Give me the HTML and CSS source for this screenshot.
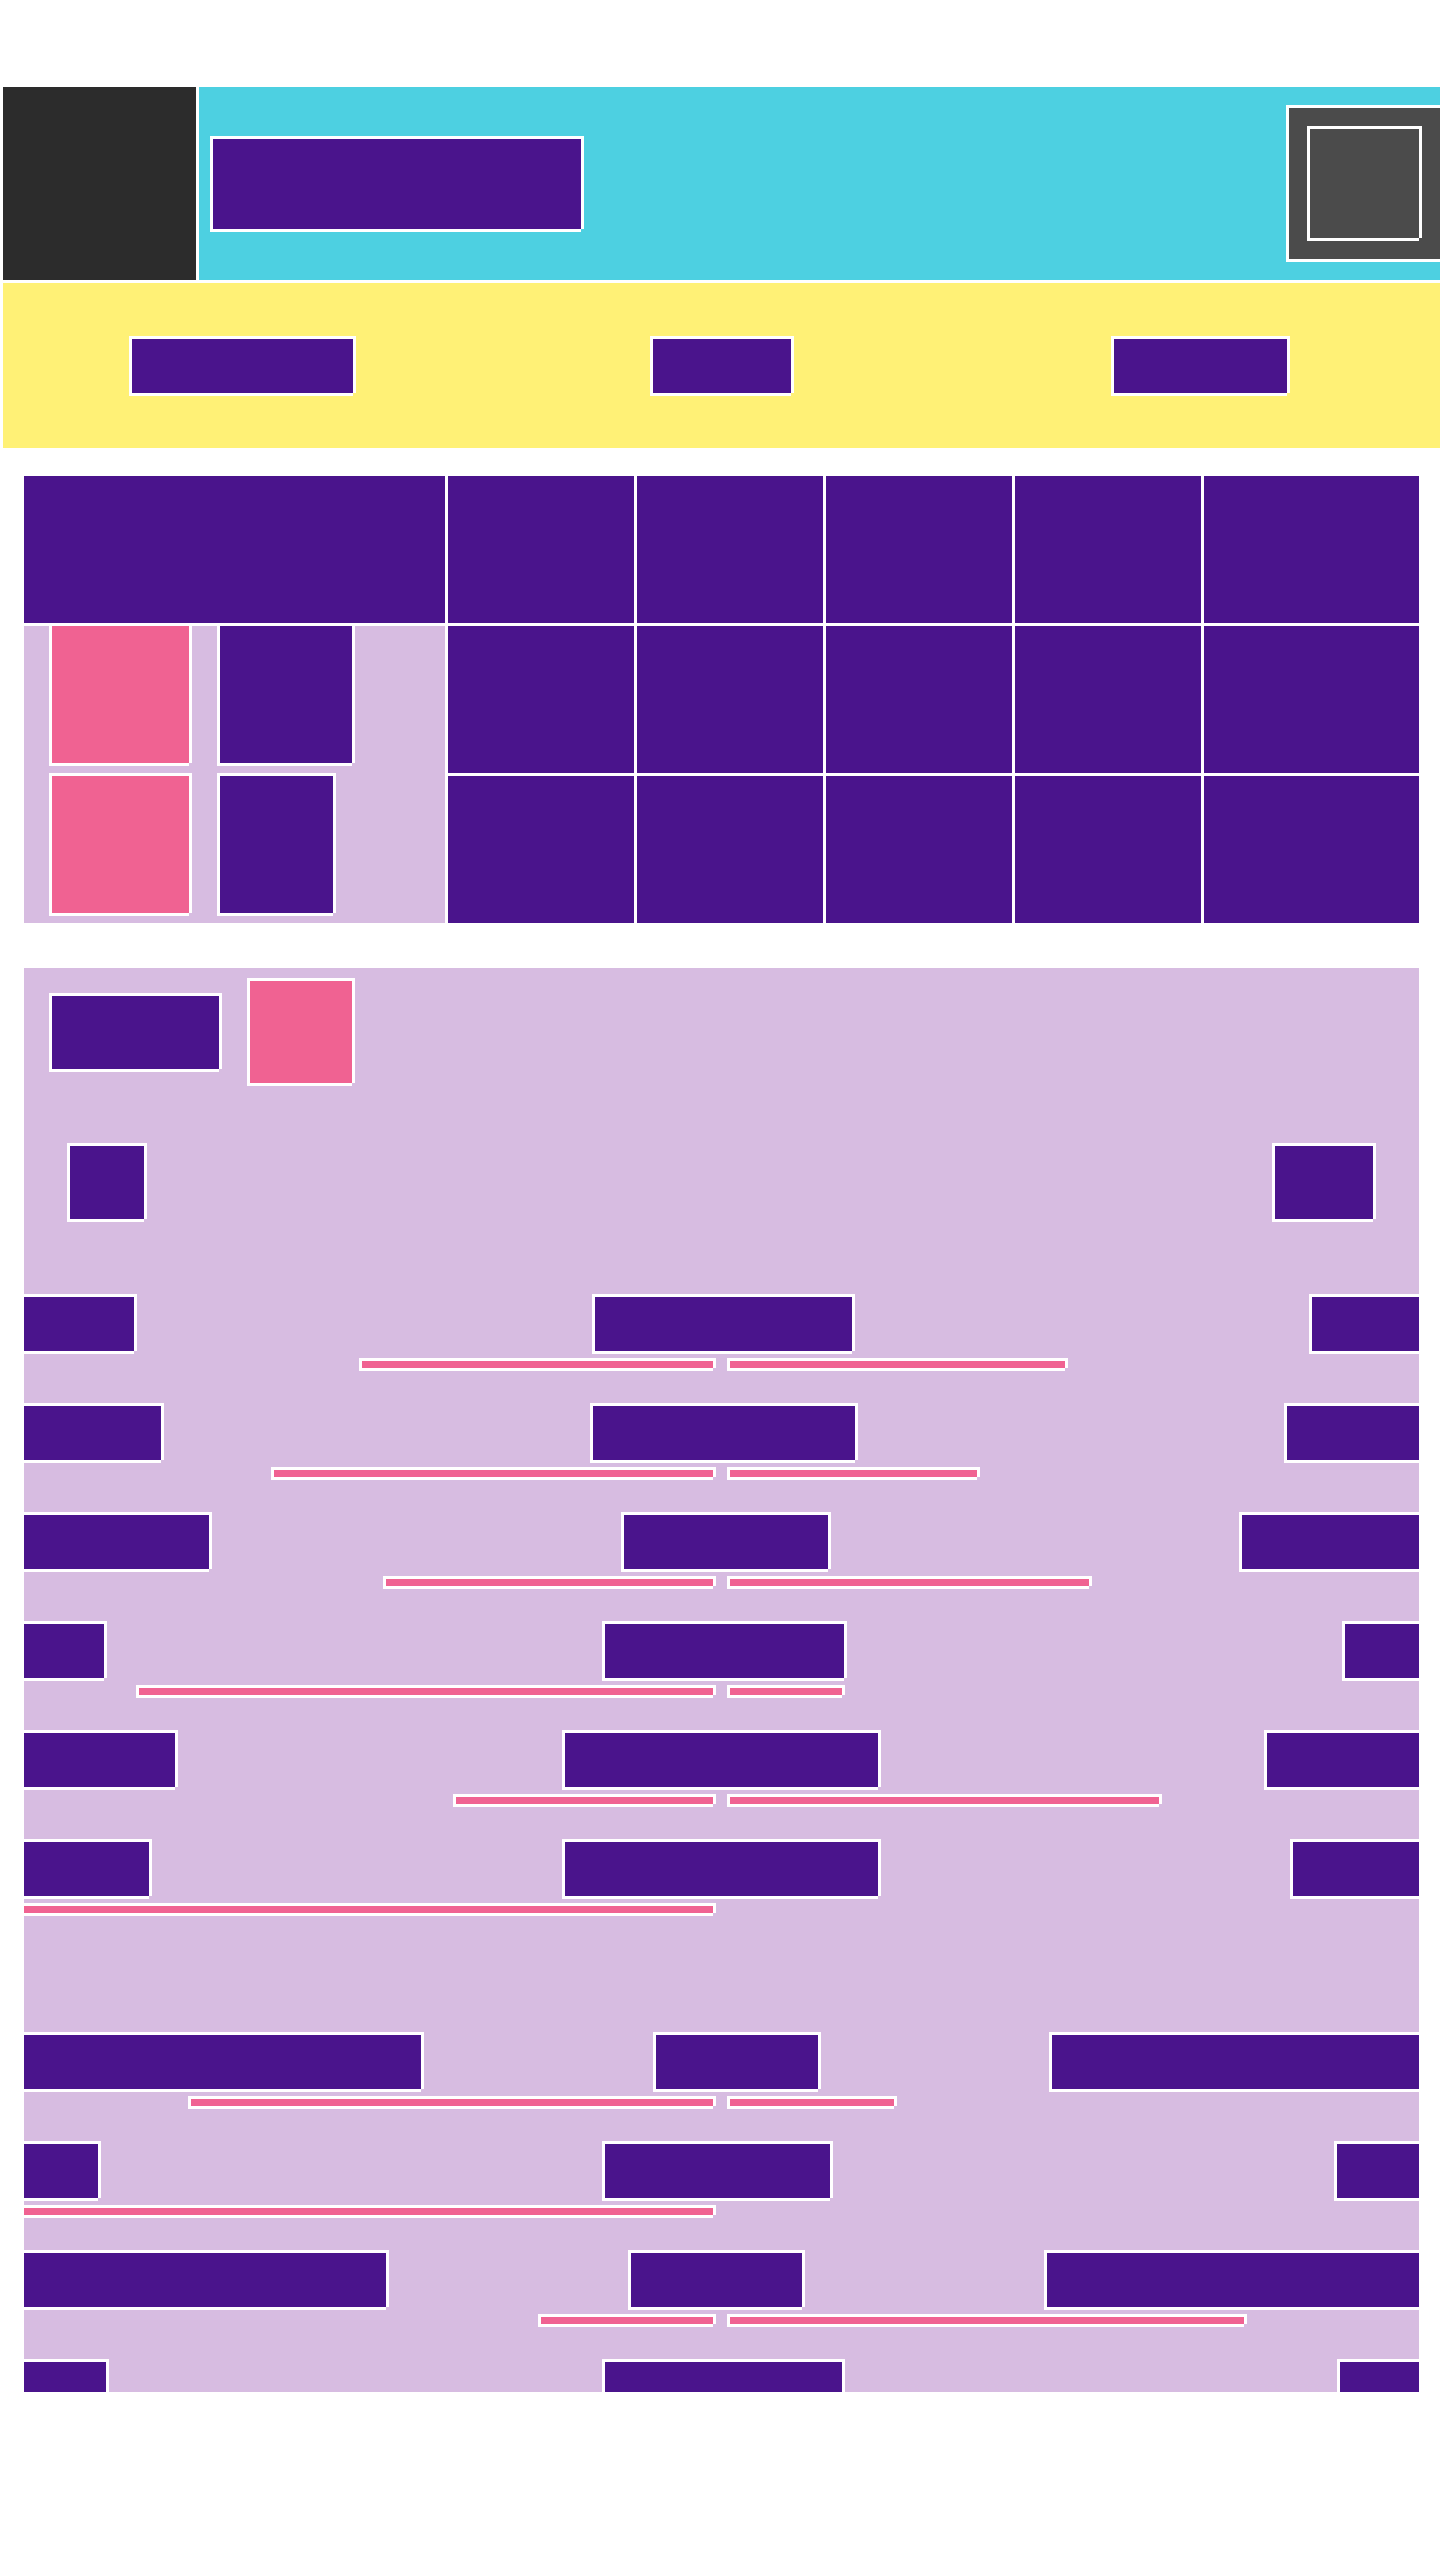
FILE: index.html
```html
<!DOCTYPE html>
<html lang="en">
<head>
<meta charset="utf-8">
<title>Wireframe</title>
<link rel="stylesheet" href="styles.css">
</head>
<body>
<div class="page">
  <header class="topbar">
    <div class="brand bx"></div>
    <div class="banner bx">
      <div class="title bx"></div>
      <div class="avatar bx"><div class="avatar-in bx"></div></div>
    </div>
  </header>

  <nav class="nav bx">
    <div class="nav-item n1 bx"></div>
    <div class="nav-item n2 bx"></div>
    <div class="nav-item n3 bx"></div>
  </nav>

  <section class="table">
    <div class="cell bx"></div>
    <div class="cell bx"></div>
    <div class="cell bx"></div>
    <div class="cell bx"></div>
    <div class="cell bx"></div>
    <div class="cell bx"></div>
    <div class="legend">
      <div class="swatch bx"></div>
      <div class="label lb1 bx"></div>
      <div class="swatch bx"></div>
      <div class="label lb2 bx"></div>
    </div>
    <div class="cell bx"></div>
    <div class="cell bx"></div>
    <div class="cell bx"></div>
    <div class="cell bx"></div>
    <div class="cell bx"></div>
    <div class="cell bx"></div>
    <div class="cell bx"></div>
    <div class="cell bx"></div>
    <div class="cell bx"></div>
    <div class="cell bx"></div>
  </section>

  <section class="panel">
    <div class="panel-head">
      <div class="ph-title bx"></div>
      <div class="ph-badge bx"></div>
    </div>
    <div class="panel-sub">
      <div class="ps-left bx"></div>
      <div class="ps-right bx"></div>
    </div>

    <div class="rows">
      <div class="row r1">
        <div class="line"><div class="blk l bx"></div><div class="blk c bx"></div><div class="blk r bx"></div></div>
        <div class="bars"><div class="half neg"><div class="bar bx" style="width:51%"></div></div><div class="half pos"><div class="bar bx" style="width:48.6%"></div></div></div>
      </div>
      <div class="row r2">
        <div class="line"><div class="blk l bx"></div><div class="blk c bx"></div><div class="blk r bx"></div></div>
        <div class="bars"><div class="half neg"><div class="bar bx" style="width:63.7%"></div></div><div class="half pos"><div class="bar bx" style="width:35.8%"></div></div></div>
      </div>
      <div class="row r3">
        <div class="line"><div class="blk l bx"></div><div class="blk c bx"></div><div class="blk r bx"></div></div>
        <div class="bars"><div class="half neg"><div class="bar bx" style="width:47.5%"></div></div><div class="half pos"><div class="bar bx" style="width:52.1%"></div></div></div>
      </div>
      <div class="row r4">
        <div class="line"><div class="blk l bx"></div><div class="blk c bx"></div><div class="blk r bx"></div></div>
        <div class="bars"><div class="half neg"><div class="bar bx" style="width:83.3%"></div></div><div class="half pos"><div class="bar bx" style="width:16.3%"></div></div></div>
      </div>
      <div class="row r5">
        <div class="line"><div class="blk l bx"></div><div class="blk c bx"></div><div class="blk r bx"></div></div>
        <div class="bars"><div class="half neg"><div class="bar bx" style="width:37.3%"></div></div><div class="half pos"><div class="bar bx" style="width:62.3%"></div></div></div>
      </div>
      <div class="row r6 group-end">
        <div class="line"><div class="blk l bx"></div><div class="blk c bx"></div><div class="blk r bx"></div></div>
        <div class="bars"><div class="half neg"><div class="bar bx" style="width:100%"></div></div><div class="half pos"></div></div>
      </div>
      <div class="row r7">
        <div class="line"><div class="blk l bx"></div><div class="blk c bx"></div><div class="blk r bx"></div></div>
        <div class="bars"><div class="half neg"><div class="bar bx" style="width:75.8%"></div></div><div class="half pos"><div class="bar bx" style="width:23.8%"></div></div></div>
      </div>
      <div class="row r8">
        <div class="line"><div class="blk l bx"></div><div class="blk c bx"></div><div class="blk r bx"></div></div>
        <div class="bars"><div class="half neg"><div class="bar bx" style="width:100%"></div></div><div class="half pos"></div></div>
      </div>
      <div class="row r9">
        <div class="line"><div class="blk l bx"></div><div class="blk c bx"></div><div class="blk r bx"></div></div>
        <div class="bars"><div class="half neg"><div class="bar bx" style="width:25%"></div></div><div class="half pos"><div class="bar bx" style="width:74.6%"></div></div></div>
      </div>
      <div class="row r10">
        <div class="line"><div class="blk l bx"></div><div class="blk c bx"></div><div class="blk r bx"></div></div>
        <div class="bars"><div class="half neg"><div class="bar bx" style="width:40%"></div></div><div class="half pos"><div class="bar bx" style="width:59.6%"></div></div></div>
      </div>
    </div>
  </section>
</div>
</body>
</html>
```

FILE: styles.css
```css
* { box-sizing: border-box; }

html, body {
  margin: 0;
  padding: 0;
  background: #ffffff;
}

body {
  font-family: "Liberation Sans", Arial, sans-serif;
  overflow-x: hidden;
}

.page {
  width: 1440px;
  padding: 87px 0 0 3px;
}

/* white outline used by every wireframe block */
.bx {
  box-shadow:
    -1.5px -1.5px 0 1.5px #ffffff,
    1.5px -1.5px 0 1.5px #ffffff,
    -1.5px 1.5px 0 1.5px #ffffff;
}

/* ---------- header ---------- */
.topbar {
  display: flex;
  gap: 3px;
  height: 193px;
}

.brand {
  flex: none;
  width: 193px;
  background: #2c2c2c;
}

.banner {
  flex: 1;
  display: flex;
  align-items: center;
  justify-content: space-between;
  padding-left: 14px;
  background: #4dd0e1;
  overflow: hidden;
}

.title {
  width: 368px;
  height: 90px;
  background: #4a148c;
}

.avatar {
  flex: none;
  width: 151px;
  height: 151px;
  padding: 21px;
  background: #4b4b4b;
}

.avatar-in {
  width: 109px;
  height: 109px;
  background: #4b4b4b;
}

/* ---------- nav ---------- */
.nav {
  margin-top: 3px;
  height: 165px;
  display: grid;
  grid-template-columns: repeat(3, 1fr);
  align-items: center;
  justify-items: center;
  background: #fff176;
}

.nav-item {
  height: 54px;
  background: #4a148c;
}

.n1 { width: 221px; }
.n2 { width: 138px; }
.n3 { width: 173px; }

/* ---------- table ---------- */
.table {
  margin: 28px 0 0 21px;
  width: 1395px;
  display: grid;
  grid-template-columns: 421px repeat(4, 186px) 1fr;
  grid-template-rows: repeat(3, 147px);
  gap: 3px;
}

.cell {
  background: #4a148c;
}

.legend {
  grid-row: span 2;
  display: grid;
  grid-template-columns: 137px auto;
  grid-template-rows: 137px 137px;
  column-gap: 31px;
  row-gap: 13px;
  align-content: start;
  justify-items: start;
  padding-left: 28px;
  background: #d7bce1;
}

.swatch {
  width: 137px;
  height: 137px;
  background: #f06292;
}

.label {
  height: 137px;
  background: #4a148c;
}

.lb1 { width: 132px; }
.lb2 { width: 113px; }

/* ---------- panel ---------- */
.panel {
  margin: 45px 0 0 21px;
  width: 1395px;
  height: 1424px;
  background: #d7bce1;
  overflow: hidden;
}

.panel-head {
  display: flex;
  align-items: center;
  gap: 31px;
  padding: 13px 28px 0;
}

.ph-title {
  width: 167px;
  height: 73px;
  background: #4a148c;
}

.ph-badge {
  width: 102px;
  height: 102px;
  background: #f06292;
}

.panel-sub {
  display: flex;
  justify-content: space-between;
  margin-top: 63px;
  padding: 0 46px;
}

.ps-left {
  width: 74px;
  height: 73px;
  background: #4a148c;
}

.ps-right {
  width: 98px;
  height: 73px;
  background: #4a148c;
}

.rows {
  margin-top: 78px;
}

.row {
  margin-bottom: 38px;
}

.row.group-end {
  margin-bottom: 122px;
}

.line {
  display: flex;
  justify-content: space-between;
  height: 54px;
}

.blk {
  height: 54px;
  background: #4a148c;
}

.bars {
  display: grid;
  grid-template-columns: 1fr 1fr;
  column-gap: 17px;
  margin-top: 10px;
  height: 7px;
}

.half {
  display: flex;
}

.half.neg { justify-content: flex-end; }
.half.pos { justify-content: flex-start; }

.bar {
  height: 7px;
  background: #f06292;
}

.r1 .l { width: 110px; } .r1 .c { width: 257px; } .r1 .r { width: 107px; }
.r2 .l { width: 137px; } .r2 .c { width: 262px; } .r2 .r { width: 132px; }
.r3 .l { width: 185px; } .r3 .c { width: 204px; } .r3 .r { width: 177px; }
.r4 .l { width: 80px; }  .r4 .c { width: 239px; } .r4 .r { width: 74px; }
.r5 .l { width: 151px; } .r5 .c { width: 313px; } .r5 .r { width: 152px; }
.r6 .l { width: 125px; } .r6 .c { width: 313px; } .r6 .r { width: 126px; }
.r7 .l { width: 397px; } .r7 .c { width: 162px; } .r7 .r { width: 367px; }
.r8 .l { width: 74px; }  .r8 .c { width: 225px; } .r8 .r { width: 82px; }
.r9 .l { width: 362px; } .r9 .c { width: 171px; } .r9 .r { width: 372px; }
.r10 .l { width: 82px; } .r10 .c { width: 237px; } .r10 .r { width: 79px; }
```
